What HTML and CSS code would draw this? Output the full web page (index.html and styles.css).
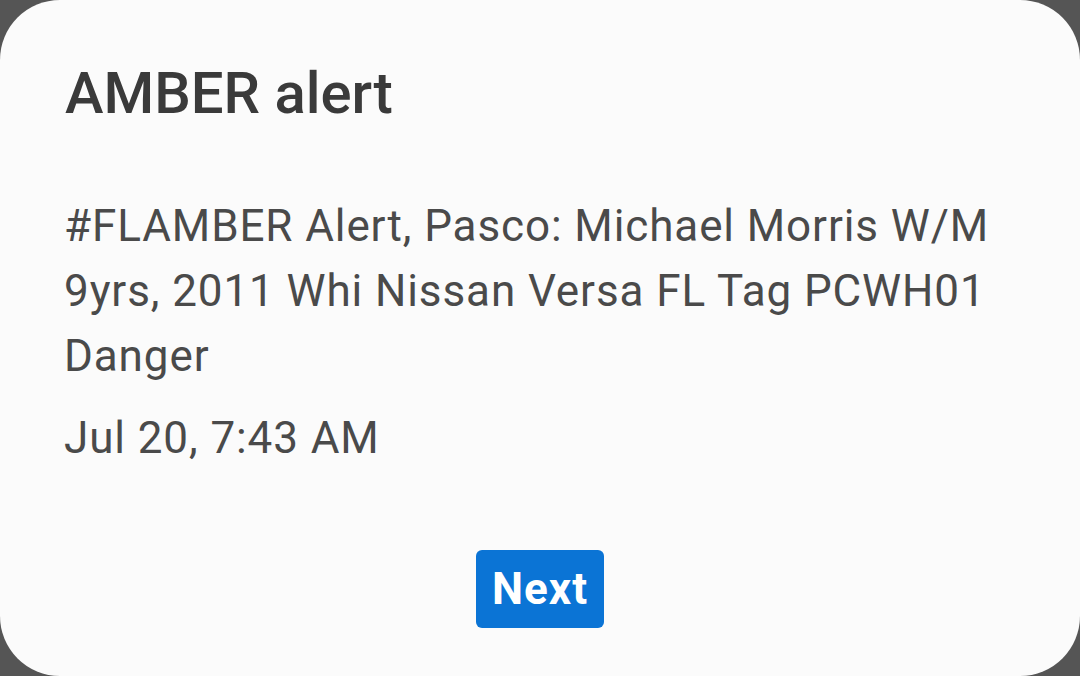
FILE: index.html
```html
<!DOCTYPE html>
<html lang="en">
<head>
    <meta charset="UTF-8">
    <meta name="viewport" content="width=device-width, initial-scale=1.0">
    <title>AMBER alert</title>
    <link rel="stylesheet" href="styles.css">
</head>
<body>
    <div class="dialog">
        <h1 class="dialog-title">AMBER alert</h1>
        <p class="dialog-message">#FLAMBER Alert, Pasco: Michael Morris W/M 9yrs, 2011 Whi Nissan Versa FL Tag PCWH01 Danger</p>
        <p class="dialog-date">Jul 20, 7:43 AM</p>
        <div class="dialog-actions">
            <button class="btn-next" type="button">Next</button>
        </div>
    </div>
</body>
</html>
```

FILE: styles.css
```css
body {
    margin: 0;
    padding: 0;
    background-color: #555;
    font-family: Roboto, "Noto Sans", Arial, sans-serif;
    overflow: hidden;
}
.dialog {
    box-sizing: border-box;
    width: 1080px;
    height: 676px;
    padding: 58px 64px 0 64px;
    background-color: #fbfbfb;
    border-radius: 60px;
}
.dialog-title {
    margin: 0 0 0 1px;
    font-size: 58px;
    font-weight: 500;
    line-height: 70px;
    color: #3a3a3a;
}
.dialog-message {
    margin: 66px 0 0 0;
    font-size: 44px;
    letter-spacing: 0.9px;
    line-height: 65px;
    color: #4a4a4a;
}
.dialog-date {
    margin: 17px 0 0 0;
    font-size: 44px;
    letter-spacing: 0.9px;
    line-height: 65px;
    color: #4a4a4a;
}
.dialog-actions {
    display: flex;
    justify-content: center;
    margin-top: 79px;
}
.btn-next {
    width: 128px;
    height: 78px;
    padding: 0;
    border: none;
    border-radius: 6px;
    background-color: #0b74d5;
    color: #fff;
    font-family: Roboto, Arial, sans-serif;
    font-size: 44px;
    font-weight: 700;
    letter-spacing: 1px;
    cursor: pointer;
}
```
